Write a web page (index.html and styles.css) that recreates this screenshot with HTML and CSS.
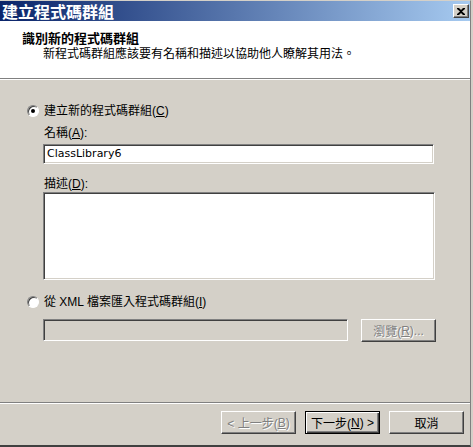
FILE: index.html
```html
<!DOCTYPE html>
<html lang="zh-Hant">
  <head>
    <meta charset="UTF-8" />
    <title>建立程式碼群組</title>
    <link rel="stylesheet" href="styles.css">
  </head>
  <body>
    <div class="window">
      <div class="titlebar">
        <span class="title">建立程式碼群組</span>
        <span class="close-btn">
          <svg width="8" height="7" viewBox="0 0 8 7">
            <path d="M0 0h2l2 2 2-2h2v1L5 3.5 8 6v1H6L4 5 2 7H0V6l3-2.5L0 1z" fill="#000"/>
          </svg>
        </span>
      </div>

      <div class="header">
        <div class="header-title">識別新的程式碼群組</div>
        <div class="header-desc">新程式碼群組應該要有名稱和描述以協助他人瞭解其用法。</div>
      </div>

      <div class="content">
        <label class="radio-row first">
          <span class="radio checked"></span>
          <span>建立新的程式碼群組(<u>C</u>)</span>
        </label>

        <div class="field-label">名稱(<u>A</u>):</div>
        <div class="textbox name-box">ClassLibrary6</div>

        <div class="field-label desc-label">描述(<u>D</u>):</div>
        <div class="textbox desc-box"></div>

        <label class="radio-row second">
          <span class="radio"></span>
          <span>從 XML 檔案匯入程式碼群組(<u>I</u>)</span>
        </label>

        <div class="import-row">
          <div class="textbox disabled-box"></div>
          <span class="btn disabled">瀏覽(<u>R</u>)...</span>
        </div>
      </div>

      <div class="footer">
        <span class="btn disabled">&lt; 上一步(<u>B</u>)</span>
        <span class="btn default">下一步(<u>N</u>) &gt;</span>
        <span class="btn">取消</span>
      </div>
    </div>
  </body>
</html>
```

FILE: styles.css
```css
body {
  margin: 0;
  background-color: #d4d0c8;
  font-family: "Liberation Sans", "Noto Sans CJK TC", sans-serif;
  font-size: 12px;
  color: #000;
}
.window {
  width: 470px;
  height: 444px;
  background-color: #d4d0c8;
  border-top: 1px solid #d4d0c8;
  border-right: 1px solid #808080;
  border-bottom: 2px solid #404040;
  display: flex;
  flex-direction: column;
}
.titlebar {
  height: 20px;
  display: flex;
  align-items: center;
  justify-content: space-between;
  padding-left: 2px;
  background: linear-gradient(to right, #0a246a, #a6caf0);
}
.title {
  color: white;
  font-weight: bold;
  font-size: 16px;
  line-height: 20px;
  font-family: "Noto Sans CJK TC", sans-serif;
}
.close-btn {
  width: 14px;
  height: 12px;
  margin-right: 1px;
  display: flex;
  align-items: center;
  justify-content: center;
  background-color: #d4d0c8;
  border: 1px solid;
  border-color: #fff #404040 #404040 #fff;
  box-shadow: inset -1px -1px #808080;
}
.header {
  height: 58px;
  flex-shrink: 0;
  background-color: white;
  border-bottom: 1px solid #808080;
  box-shadow: 0 1px 0 #fff;
  padding-left: 22px;
  padding-top: 9px;
  box-sizing: border-box;
}
.header-title {
  font-weight: bold;
  font-size: 13px;
  line-height: 16px;
  font-family: "Noto Sans CJK TC", sans-serif;
}
.header-desc {
  margin-left: 21px;
  margin-top: 1px;
  line-height: 14px;
}
.content {
  display: flex;
  flex-direction: column;
  padding-left: 27px;
  flex: 1;
}
.radio-row {
  display: flex;
  align-items: center;
  height: 14px;
  line-height: 14px;
}
.radio-row.first {
  margin-top: 25px;
}
.radio-row.second {
  margin-top: 15px;
}
.radio {
  width: 10px;
  height: 10px;
  border-radius: 50%;
  background-color: white;
  border: 1px solid;
  border-color: #808080 #fff #fff #808080;
  box-shadow: inset 1px 1px #404040;
  margin-right: 5px;
  display: flex;
  align-items: center;
  justify-content: center;
}
.radio.checked::after {
  content: "";
  width: 4px;
  height: 4px;
  border-radius: 50%;
  background-color: #000;
}
.field-label {
  margin-left: 17px;
  margin-top: 8px;
  line-height: 14px;
}
.desc-label {
  margin-top: 13px;
}
.textbox {
  margin-left: 16px;
  margin-top: 4px;
  box-sizing: border-box;
  background-color: white;
  border: 1px solid;
  border-color: #808080 #fff #fff #808080;
  box-shadow: inset 1px 1px #404040, inset -1px -1px #d4d0c8;
}
.name-box {
  width: 391px;
  height: 20px;
  flex-shrink: 0;
  line-height: 18px;
  padding-left: 3px;
  font-family: "DejaVu Sans", sans-serif;
  font-size: 11px;
}
.desc-box {
  width: 392px;
  height: 88px;
  flex-shrink: 0;
  margin-top: 1px;
}
.import-row {
  display: flex;
  align-items: flex-start;
  margin-top: 10px;
}
.disabled-box {
  width: 305px;
  height: 22px;
  margin-top: 0;
  background-color: #d4d0c8;
}
.btn {
  width: 75px;
  height: 23px;
  box-sizing: border-box;
  display: flex;
  align-items: center;
  justify-content: center;
  background-color: #d4d0c8;
  border: 1px solid;
  border-color: #fff #404040 #404040 #fff;
  box-shadow: inset -1px -1px #808080;
}
.btn.disabled {
  color: #808080;
  text-shadow: 1px 1px #fff;
}
.import-row .btn {
  margin-left: 13px;
}
.btn.default {
  border: 1px solid #000;
  box-shadow: inset 1px 1px #fff, inset -1px -1px #404040, inset -2px -2px #808080;
}
.footer {
  height: 43px;
  flex-shrink: 0;
  border-top: 1px solid #808080;
  box-shadow: inset 0 1px #fff;
  display: flex;
  justify-content: flex-end;
  align-items: flex-start;
  gap: 9px;
  padding-top: 8px;
  padding-right: 6px;
  box-sizing: border-box;
}
```
